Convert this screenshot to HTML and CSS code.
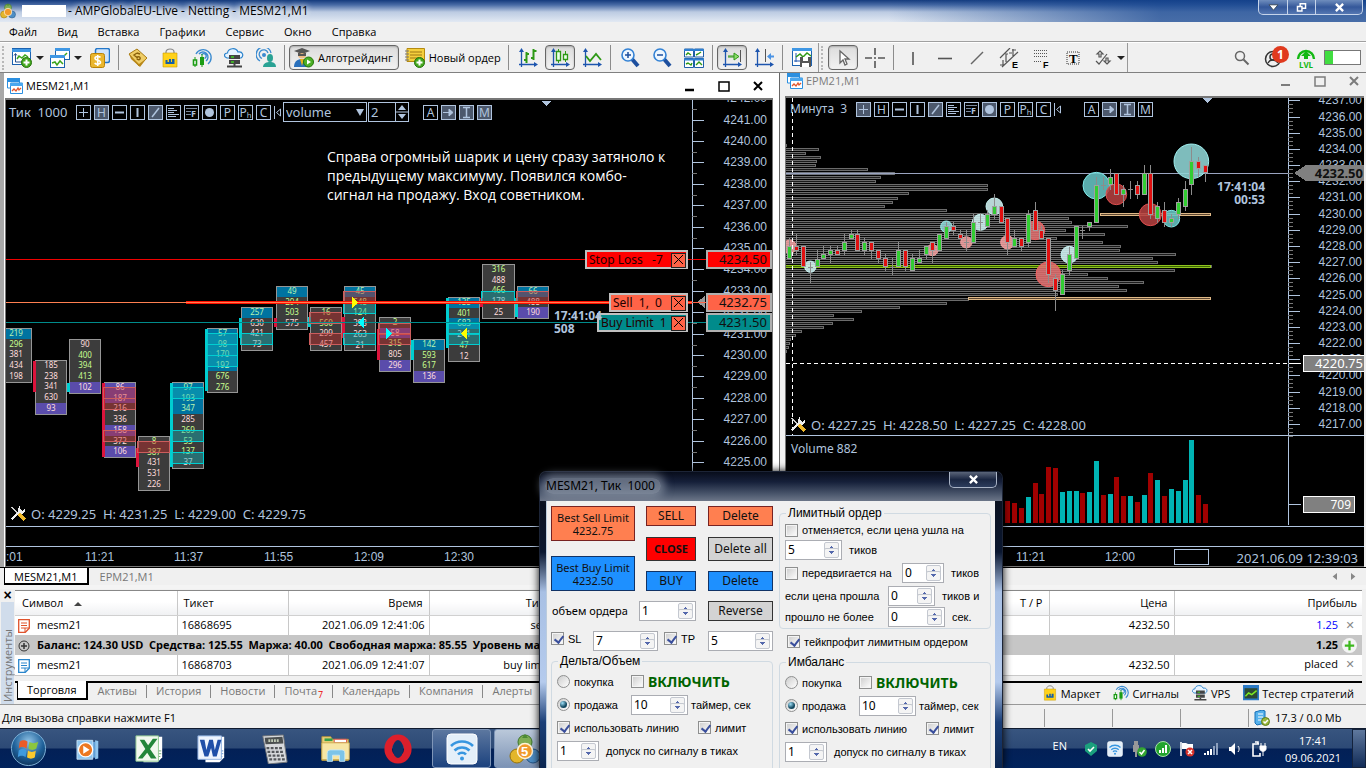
FILE: index.html
```html
<!DOCTYPE html>
<html lang="ru">
<head>
<meta charset="utf-8">
<title>AMPGlobalEU-Live - Netting - MESM21,M1</title>
<link rel="stylesheet" href="styles.css">
</head>
<body>
<svg class="defs" aria-hidden="true">
  <symbol id="i-newchart" viewBox="0 0 20 20"><rect x=".5" y=".5" width="18" height="16" fill="#fff" stroke="#1c62b0"/><path d="M0 1h19v3H0z" fill="#3f97e4"/><path d="M3.500 6v8h12M2 7.500l1.500-2 1.500 2" stroke="#27508c" fill="none"/><path d="M5 11l2-3 3 2 3-3 3 2" stroke="#3ba41c" fill="none" stroke-width="1.500"/><circle cx="14.500" cy="14.500" r="5" fill="#45a81f" stroke="#24720c"/><path d="M14.500 11.500v6M11.500 14.500h6" stroke="#fff" stroke-width="2"/></symbol>
  <symbol id="i-profiles" viewBox="0 0 20 20"><rect x="5.500" y=".5" width="14" height="11" fill="#fff" stroke="#1c62b0"/><path d="M5 0h15v3H5z" fill="#3f97e4"/><path d="M13 9l4-4" stroke="#3ba41c" stroke-width="1.500"/><rect x=".5" y="7.500" width="14" height="12" fill="#fff" stroke="#1c62b0"/><path d="M0 7h15v3H0z" fill="#3f97e4"/><path d="M2 15l3-1 2 3 3-4 3 3" stroke="#3ba41c" fill="none" stroke-width="1.500"/></symbol>
  <symbol id="i-dollar" viewBox="0 0 20 20"><rect x="5.500" y=".5" width="14" height="14" rx="2" fill="#cfe4fb" stroke="#2477c9" stroke-width="1.500"/><rect x=".5" y="5.500" width="14" height="14" rx="2" fill="#eab62e" stroke="#b98308"/><path d="M10.500 9.500c-1-1.500-5.500-1.500-5.500.8 0 2.500 5.500 1.500 5.500 4 0 2.300-4.500 2.300-5.800.6M7.700 7v11" stroke="#fff" fill="none" stroke-width="1.600"/></symbol>
  <symbol id="i-gold" viewBox="0 0 20 20"><path d="M1 6l8-5 10 9-8 8z" fill="#f0ce67" stroke="#a97b14"/><path d="M1 6l2 5 9 8 7-9-8 6z" fill="#b88718"/><path d="M9 5l-3 2 3 2.500c1-1.500 4-.5 3 1.500-1 1.300-3 .6-3-.5M9 5l3 1" fill="none" stroke="#8a610b" stroke-width="1.400"/></symbol>
  <symbol id="i-bag" viewBox="0 0 20 20"><path d="M6 7V4c0-4 8-4 8 0v3" fill="none" stroke="#888" stroke-width="1.200"/><path d="M3 5h14v14H3z" fill="#ffd21a" stroke="#c99a00" stroke-width=".6"/><path d="M5.500 16v-4h2v2h1.500v-3h2v3H12v-3h2.500v5z" fill="#155fa8"/></symbol>
  <symbol id="i-signal" viewBox="0 0 20 20"><path d="M4 6a8 8 0 1 1 12 10M7 6a5 5 0 1 1 7 7M9.500 7a2.500 2.500 0 1 1 3 3.500" fill="none" stroke="#3b8bd0" stroke-width="1.400"/><path d="M3 9v10M10 6v13" stroke="#1b9c14"/><path d="M1.500 12h3v5h-3z" fill="#fff" stroke="#1b9c14" stroke-width="1.600"/><path d="M8 9h4v8H8z" fill="#1b9c14"/></symbol>
  <symbol id="i-vps" viewBox="0 0 20 20"><path d="M5 10H3C-.5 9-.5 5 3.500 5 4 0 12-1 14 4c5-1 6 4 3 6z" fill="#e8f4ff" stroke="#2b83cc" stroke-width="1.200"/><path d="M5 7h11v4H5zM5 12h11v4H5z" fill="#444"/><path d="M7 9h3M7 14h3" stroke="#40d020" stroke-width="1.300"/><path d="M10.500 16v2M3 18.500h15" stroke="#444" stroke-width="2"/></symbol>
  <symbol id="i-community" viewBox="0 0 20 20"><path d="M4 13A7.500 7.500 0 1 1 15 5M6 10.500a4.500 4.500 0 1 1 6-5.500" fill="none" stroke="#3b8bd0" stroke-width="1.300"/><circle cx="8" cy="7" r="2" fill="#3b8bd0"/><ellipse cx="14" cy="10" rx="3" ry="4" fill="#2aa294"/><path d="M7 19c0-4 4-5 7-5s6 1 6 5z" fill="#2aa294"/></symbol>
  <symbol id="i-algo" viewBox="0 0 20 20"><circle cx="8" cy="6.500" r="4" fill="#f0bc85"/><path d="M0 3l8-3 8 3-8 3zM4 5v3h8V5z" fill="#555"/><path d="M0 19c0-6 4-8 8-8s7 2 8 8z" fill="#2a70bb"/><path d="M6 11l2 7 2-7z" fill="#e5b11d"/><circle cx="14.500" cy="14" r="5" fill="#4caf26" stroke="#26760c"/><path d="M13 11.500l4 2.500-4 2.500z" fill="#fff"/></symbol>
  <symbol id="i-order" viewBox="0 0 20 20"><path d="M2 .5h17.500v13H2z" fill="#f4cf3d" stroke="#b58a10"/><path d="M5 4h12M5 7h12M5 10h9" stroke="#9d7715"/><path d="M0 3h4M0 6h4M0 9h4M0 12h4" stroke="#777"/><circle cx="14.500" cy="14.500" r="5" fill="#45a81f" stroke="#24720c"/><path d="M14.500 11.500v6M11.500 14.500h6" stroke="#fff" stroke-width="2"/></symbol>
  <symbol id="i-axes" viewBox="0 0 20 20"><path d="M3.500 2v17M1 16.500h17" stroke="#1d55ae" stroke-width="1.300"/><path d="M1 4l2.500-4L6 4zM16 14l4 2.500-4 2.500z" fill="#1d55ae"/></symbol>
  <symbol id="i-bars" viewBox="0 0 20 20"><use href="#i-axes"/><path d="M8.500 4v11M6 12h2M9 6h2M15.500 1v11M13 10h2M16 3h2.500" stroke="#2e9916" stroke-width="2"/></symbol>
  <symbol id="i-candles" viewBox="0 0 20 20"><use href="#i-axes"/><path d="M8.500 1v14M15.500 3v11" stroke="#2e9916"/><path d="M6.500 3.500h4v9h-4zM13.500 6.500h4v5h-4z" fill="#eaffea" stroke="#2e9916" stroke-width="1.300"/></symbol>
  <symbol id="i-line" viewBox="0 0 20 20"><use href="#i-axes"/><path d="M4 8l4 5 6-7 5 6" fill="none" stroke="#2e9916" stroke-width="1.800"/></symbol>
  <symbol id="i-zoomin" viewBox="0 0 20 20"><path d="M12 11l6 7" stroke="#1d4f9e" stroke-width="4"/><circle cx="8" cy="7" r="6" fill="#eef7ff" stroke="#3382d5" stroke-width="1.600"/><path d="M8 4v6M5 7h6" stroke="#1d4f9e" stroke-width="1.500"/></symbol>
  <symbol id="i-zoomout" viewBox="0 0 20 20"><path d="M12 11l6 7" stroke="#1d4f9e" stroke-width="4"/><circle cx="8" cy="7" r="6" fill="#eef7ff" stroke="#3382d5" stroke-width="1.600"/><path d="M5 7h6" stroke="#1d4f9e" stroke-width="1.500"/></symbol>
  <symbol id="i-tile" viewBox="0 0 20 20"><path d="M.5 1h9v8h-9zM10.500 1h9v8h-9zM.5 10.500h9v9h-9zM10.500 10.500h9v9h-9z" fill="#fff" stroke="#1f5fa8"/><path d="M0 1h20v2H0zM0 10.500h20v2H0z" fill="#2f7fd0"/><path d="M2 7l2-2 3 2M12 7l2-1 3-2M2 16l2-1 3 2 1-2M12 17l3-3 3 3" fill="none" stroke="#2e9916" stroke-width="1.400"/></symbol>
  <symbol id="i-scroll" viewBox="0 0 20 20"><use href="#i-axes"/><path d="M18.500 2v12" stroke="#555"/><path d="M6 8h6M12 5l5 3.500-5 3.500zM6 9h6" fill="#8ddc6c" stroke="#2e9916"/></symbol>
  <symbol id="i-shift" viewBox="0 0 20 20"><use href="#i-axes"/><path d="M11.500 1v13" stroke="#555"/><path d="M20 7.500h-3V5l-4 3.500 4 3.500V9.500h3z" fill="#4b93e4"/></symbol>
  <symbol id="i-template" viewBox="0 0 20 20"><rect x=".5" y=".5" width="19" height="17" fill="#fff" stroke="#1c62b0"/><path d="M0 0h20v3H0z" fill="#3f97e4"/><path d="M4 5v9M2 13h6" stroke="#1d55ae"/><path d="M4 9l4-3 3 3 4-4 4 3" stroke="#2e9916" fill="none" stroke-width="1.500"/><path d="M8 9h11v10H8z" fill="#555"/><path d="M11 9h5v4h-5zM10 15h7v4h-7z" fill="#fff"/></symbol>
  <symbol id="i-cursor" viewBox="0 0 20 20"><path d="M7 3v12l3-3 2 5 2-1-2-5h4z" fill="#fff" stroke="#666" stroke-width="1.300"/></symbol>
  <symbol id="i-cross" viewBox="0 0 20 20"><path d="M10 0v7M10 13v7M0 10h7M13 10h7M9 10h2" stroke="#555" stroke-width="1.600"/></symbol>
  <symbol id="i-vline" viewBox="0 0 20 20"><path d="M10 4v13" stroke="#555" stroke-width="1.600"/></symbol>
  <symbol id="i-hline" viewBox="0 0 20 20"><path d="M3 10.500h14" stroke="#555" stroke-width="1.600"/></symbol>
  <symbol id="i-trend" viewBox="0 0 20 20"><path d="M4 16L16 4" stroke="#666" stroke-width="1.500"/></symbol>
  <symbol id="i-channel" viewBox="0 0 20 20"><path d="M1 10L11 0M3 19L19 4M1 17h3v-5M7 14V6h2M14 8V1M10 5h3M13 2h4" stroke="#555" fill="none" stroke-width="1.200"/></symbol>
  <symbol id="i-fibo" viewBox="0 0 20 20"><path d="M3 2.500h14M3 5.500h14M3 8.500h14M3 13.500h8" stroke="#555" stroke-dasharray="1 1"/></symbol>
  <symbol id="i-text" viewBox="0 0 20 20"><path d="M4 4h12v12H4z" fill="none" stroke="#333" stroke-dasharray="1 1"/></symbol>
  <symbol id="i-objects" viewBox="0 0 20 20"><path d="M7 3l3 3H8v3H6V6H4zM14 16l3-3h-2v-3h-2v3h-2zM3 13l3 3 8-10" fill="none" stroke="#555" stroke-width="1.200"/></symbol>
  <symbol id="i-search" viewBox="0 0 20 20"><circle cx="8" cy="8" r="4.500" fill="none" stroke="#666" stroke-width="1.500"/><path d="M11.500 11.500l5 5" stroke="#666" stroke-width="2"/></symbol>
  <symbol id="i-user" viewBox="0 0 20 20"><circle cx="9" cy="11" r="7.500" fill="none" stroke="#333" stroke-width="1.500"/><circle cx="9" cy="9" r="3" fill="none" stroke="#333" stroke-width="1.500"/><path d="M4 15c2-4 8-4 10 0" fill="none" stroke="#333" stroke-width="1.500"/></symbol>
  <symbol id="i-level" viewBox="0 0 20 14"><path d="M2 12a8 8 0 1 1 16 0" fill="none" stroke="#14b814" stroke-width="2.400"/><path d="M10 4l5 5h-3v3H8V9H5z" fill="#14b814"/></symbol>
  <symbol id="i-window" viewBox="0 0 16 16"><path d="M.5 1h12v9H.5z" fill="#fff" stroke="#2b8fe0"/><path d="M0 0h13v4H0z" fill="#2b8fe0"/><path d="M3.500 5h12v10.500h-12z" fill="#fff" stroke="#2b8fe0"/><path d="M3 5h13v3H3z" fill="#4aa7ee"/><path d="M5 13l2-2 2 2 2-3 1 2 2-2" fill="none" stroke="#e0542c" stroke-width="1.300"/></symbol>
  <symbol id="i-mt" viewBox="0 0 32 32"><circle cx="16" cy="9" r="7" fill="#7fae55" stroke="#3e7529"/><circle cx="8" cy="23" r="7" fill="#e3b62b" stroke="#94720e"/><circle cx="24" cy="23" r="7" fill="#4d8dc4" stroke="#235283"/><path d="M16 1l3 4h-6z" fill="#4c8b34"/><circle cx="16" cy="18" r="7.500" fill="#f19a2b" stroke="#fff4d8" stroke-width="1.500"/></symbol>
  <symbol id="i-doc" viewBox="0 0 12 14"><path d="M.7.7h10.600v8.600l-4 4H.7z" fill="#fff" stroke="currentColor" stroke-width="1.300"/><path d="M3 4h6M3 6.500h6M3 9h4" stroke="currentColor"/><path d="M7 13V9h4" fill="none" stroke="currentColor"/></symbol>
  <symbol id="i-tester" viewBox="0 0 20 20"><path d="M1 1h18v17H1z" fill="#2d4a35" stroke="#2b7ac7" stroke-width="2"/><path d="M0 0h20v4H0z" fill="#2b7ac7"/><path d="M3 14l4-4 4 2 6-5" stroke="#7bea23" fill="none" stroke-width="1.800"/></symbol>
  <symbol id="i-server" viewBox="0 0 16 16"><path d="M1 2l7-2 3 1v12l-8 2-2-2z" fill="#55b1ec" stroke="#1670b8"/><path d="M4 4h5M4 7h5M4 10h4" stroke="#fff"/><circle cx="11.500" cy="11.500" r="4" fill="#9ab83b" stroke="#5d7a1b"/><path d="M9.500 11.500l1.500 1.500 3-3" stroke="#fff" fill="none" stroke-width="1.500"/></symbol>
  <symbol id="i-wifi" viewBox="0 0 32 32"><rect x="1" y="1" width="30" height="30" rx="4" fill="#e4eff9" stroke="#fff"/><path d="M5 13c6-6 16-6 22 0M8.500 17.500c4-4 11-4 15 0M12 21.500c2-2.300 6-2.300 8 0" fill="none" stroke="#3796e0" stroke-width="2.600"/><circle cx="16" cy="25.500" r="2" fill="#3796e0"/></symbol>
  <symbol id="i-tools" viewBox="0 0 18 18"><path d="M3 3l7 8" stroke="#ccc" stroke-width="1.500"/><path d="M10 10l6 6" stroke="#f0b92b" stroke-width="3"/><path d="M2.500 15.500L12 6" stroke="#eee" stroke-width="2"/><path d="M11 1.500v4.500l2.500 1L16 4v4l-3 2-4-2V5z" fill="#eee"/></symbol>
</svg>

<header class="titlebar">
  <svg class="app-icon"><use href="#i-mt"/></svg>
  <span class="masked"></span>
  <h1>- AMPGlobalEU-Live - Netting - MESM21,M1</h1>
  <div class="win-buttons">
    <button aria-label="Свернуть"><svg viewBox="0 0 12 10"><path d="M1 2h10L6 8z" fill="#fff" stroke="#345"/></svg></button>
    <button aria-label="Развернуть"><svg viewBox="0 0 12 10"><path d="M4.500.8h6v5h-6z" fill="none" stroke="#fff" stroke-width="1.600"/><path d="M1.500 3.800h5v5h-5z" fill="#48669d" stroke="#fff" stroke-width="1.600"/></svg></button>
    <button class="wide" aria-label="Закрыть"><svg viewBox="0 0 12 10"><path d="M2 1l8 8M10 1L2 9" stroke="#fff" stroke-width="2.600"/></svg></button>
  </div>
</header>

<nav class="menu">
  <a href="#">Файл</a><a href="#">Вид</a><a href="#">Вставка</a><a href="#">Графики</a><a href="#">Сервис</a><a href="#">Окно</a><a href="#">Справка</a>
</nav>

<div class="toolbar">
  <i class="grip"></i>
  <button class="tb drop" aria-label="Новый график"><svg><use href="#i-newchart"/></svg><b class="caret"></b></button>
  <button class="tb drop" aria-label="Профили"><svg><use href="#i-profiles"/></svg><b class="caret"></b></button>
  <button class="tb" aria-label="Обзор рынка"><svg><use href="#i-dollar"/></svg></button>
  <i class="sep"></i>
  <button class="tb" aria-label="Редактор"><svg><use href="#i-gold"/></svg></button>
  <button class="tb" aria-label="Маркет"><svg><use href="#i-bag"/></svg></button>
  <button class="tb" aria-label="Сигналы"><svg><use href="#i-signal"/></svg></button>
  <button class="tb" aria-label="VPS"><svg><use href="#i-vps"/></svg></button>
  <button class="tb" aria-label="Сообщество"><svg><use href="#i-community"/></svg></button>
  <i class="sep"></i>
  <button class="tb text pressed"><svg><use href="#i-algo"/></svg>Алготрейдинг</button>
  <button class="tb text"><svg><use href="#i-order"/></svg>Новый ордер</button>
  <i class="sep"></i>
  <button class="tb" aria-label="Бары"><svg><use href="#i-bars"/></svg></button>
  <button class="tb pressed" aria-label="Свечи"><svg><use href="#i-candles"/></svg></button>
  <button class="tb" aria-label="Линия"><svg><use href="#i-line"/></svg></button>
  <i class="sep"></i>
  <button class="tb" aria-label="Увеличить"><svg><use href="#i-zoomin"/></svg></button>
  <button class="tb" aria-label="Уменьшить"><svg><use href="#i-zoomout"/></svg></button>
  <button class="tb" aria-label="Плитка"><svg><use href="#i-tile"/></svg></button>
  <i class="sep"></i>
  <button class="tb pressed" aria-label="Автопрокрутка"><svg><use href="#i-scroll"/></svg></button>
  <button class="tb" aria-label="Сдвиг"><svg><use href="#i-shift"/></svg></button>
  <i class="sep"></i>
  <button class="tb" aria-label="Шаблоны"><svg><use href="#i-template"/></svg></button>
  <i class="edge"></i><i class="grip"></i>
  <button class="tb pressed" aria-label="Курсор"><svg><use href="#i-cursor"/></svg></button>
  <button class="tb" aria-label="Перекрестие"><svg><use href="#i-cross"/></svg></button>
  <i class="sep"></i>
  <button class="tb" aria-label="Вертикальная линия"><svg><use href="#i-vline"/></svg></button>
  <button class="tb" aria-label="Горизонтальная линия"><svg><use href="#i-hline"/></svg></button>
  <button class="tb" aria-label="Трендовая линия"><svg><use href="#i-trend"/></svg></button>
  <button class="tb" aria-label="Канал"><svg><use href="#i-channel"/><text x="13" y="20" class="glyph">E</text></svg></button>
  <button class="tb" aria-label="Фибоначчи"><svg><use href="#i-fibo"/><text x="12" y="20" class="glyph">F</text></svg></button>
  <button class="tb" aria-label="Текст"><svg><use href="#i-text"/><text x="6" y="15" class="glyph serif">T</text></svg></button>
  <button class="tb drop" aria-label="Объекты"><svg><use href="#i-objects"/></svg><b class="caret"></b></button>
  <i class="edge"></i>
  <span class="spacer"></span>
  <button class="tb" aria-label="Поиск"><svg><use href="#i-search"/></svg></button>
  <button class="tb" aria-label="Уведомления"><svg><use href="#i-user"/></svg><span class="count">1</span></button>
  <button class="tb level"><svg><use href="#i-level"/></svg>LVL</button>
  <span class="battery"><i></i></span>
</div>

<main class="workspace">
  <section class="pane left">
    <header class="pane-head">
      <svg><use href="#i-window"/></svg><h2>MESM21,M1</h2>
      <button aria-label="Свернуть"><svg viewBox="0 0 12 12"><path d="M1 10h9" stroke="currentColor" stroke-width="2.500"/></svg></button>
      <button aria-label="Развернуть"><svg viewBox="0 0 12 12"><path d="M1 2h10v9H1z" fill="none" stroke="currentColor" stroke-width="1.500"/></svg></button>
      <button aria-label="Закрыть"><svg viewBox="0 0 12 12"><path d="M2 2l8 8M10 2l-8 8" stroke="currentColor" stroke-width="2"/></svg></button>
    </header>
    <div class="chart">
      <div class="plot">
        <svg id="tick-plot" class="canvas" role="img" aria-label="MESM21 тик 1000"></svg>
        <div class="tools" data-on="1 4 12 13 14">
          <span class="tools-title">Тик&nbsp; 1000</span>
        </div>
      </div>
      <svg id="tick-axis" class="canvas axis"></svg>
      <div class="blank"></div>
      <svg id="tick-time" class="canvas time"></svg>
    </div>
  </section>
  <section class="pane right">
    <header class="pane-head">
      <svg><use href="#i-window"/></svg><h2>EPM21,M1</h2>
      <button aria-label="Свернуть"><svg viewBox="0 0 12 12"><path d="M1 10h9" stroke="currentColor" stroke-width="2"/></svg></button>
      <button aria-label="Развернуть"><svg viewBox="0 0 12 12"><path d="M1 2h10v9H1z" fill="none" stroke="currentColor" stroke-width="1.500"/></svg></button>
      <button aria-label="Закрыть"><svg viewBox="0 0 12 12"><path d="M2 2l8 8M10 2l-8 8" stroke="currentColor" stroke-width="2"/></svg></button>
    </header>
    <div class="chart">
      <div class="plot">
        <svg id="minute-plot" class="canvas" role="img" aria-label="EPM21 минута 3"></svg>
        <div class="tools" data-on="0 4 7 12 13">
          <span class="tools-title">Минута&nbsp; 3</span>
        </div>
      </div>
      <svg id="minute-axis" class="canvas axis"></svg>
      <div class="blank"></div>
      <svg id="minute-time" class="canvas time"></svg>
    </div>
  </section>
</main>

<nav class="chart-tabs">
  <a class="active" href="#">MESM21,M1</a><a href="#">EPM21,M1</a>
  <span class="arrows"><svg viewBox="0 0 26 8"><path d="M5 0v8L0 4zM21 0v8l5-4z" fill="#888"/></svg></span>
</nav>

<section class="toolbox">
  <div class="rail"><button aria-label="Закрыть">×</button><span>Инструменты</span></div>
  <div class="toolbox-main">
    <table>
      <colgroup><col class="c-sym"><col class="c-ticket"><col class="c-time"><col class="c-type"><col><col class="c-tp"><col class="c-price"><col class="c-profit"></colgroup>
      <thead><tr><th class="l">Символ <b class="up"></b></th><th class="l">Тикет</th><th>Время</th><th>Тип</th><th>Объем</th><th>T / P</th><th>Цена</th><th class="p">Прибыль</th></tr></thead>
      <tbody>
        <tr><td class="l"><svg class="doc sell"><use href="#i-doc"/></svg>mesm21</td><td class="l">16868695</td><td>2021.06.09 12:41:06</td><td>sell</td><td></td><td></td><td>4232.50</td><td class="blue">1.25<button aria-label="Закрыть">✕</button></td></tr>
        <tr class="sum"><td class="l" colspan="7"><svg class="doc plus" viewBox="0 0 12 12"><circle cx="6" cy="6" r="5" fill="none" stroke="#333"/><path d="M6 3v6M3 6h6" stroke="#333" stroke-width="1.500"/></svg>Баланс: 124.30 USD&nbsp; Средства: 125.55&nbsp; Маржа: 40.00&nbsp; Свободная маржа: 85.55&nbsp; Уровень маржи: 313.88 %</td><td>1.25<button class="add" aria-label="Добавить"><svg viewBox="0 0 16 16"><circle cx="8" cy="8" r="8" fill="#f4f4f4"/><path d="M8 3v10M3 8h10" stroke="#3db81e" stroke-width="2.400"/></svg></button></td></tr>
        <tr><td class="l"><svg class="doc buy"><use href="#i-doc"/></svg>mesm21</td><td class="l">16868703</td><td>2021.06.09 12:41:07</td><td>buy limit</td><td></td><td></td><td>4232.50</td><td>placed<button aria-label="Удалить">✕</button></td></tr>
      </tbody>
    </table>
    <nav class="tool-tabs">
      <a class="active" href="#">Торговля</a><a href="#">Активы</a><a href="#">История</a><a href="#">Новости</a><a href="#">Почта<sub>7</sub></a><a href="#">Календарь</a><a href="#">Компания</a><a href="#">Алерты</a>
      <span class="spacer"></span>
      <a class="svc" href="#"><svg><use href="#i-bag"/></svg>Маркет</a>
      <a class="svc" href="#"><svg><use href="#i-signal"/></svg>Сигналы</a>
      <a class="svc" href="#"><svg><use href="#i-vps"/></svg>VPS</a>
      <a class="svc" href="#"><svg><use href="#i-tester"/></svg>Тестер стратегий</a>
    </nav>
  </div>
</section>

<div class="status">
  <span class="hint">Для вызова справки нажмите F1</span>
  <span class="cell"></span><span class="cell"></span><span class="cell"></span>
  <span class="cell net"><svg><use href="#i-server"/></svg>17.3 / 0.0 Mb</span>
</div>

<footer class="taskbar">
  <button class="task" aria-label="Пуск"><svg viewBox="0 0 38 38"><defs><radialGradient id="orb" cx=".5" cy=".3" r=".8"><stop offset="0" stop-color="#8fc3e6"/><stop offset=".55" stop-color="#1d5f98"/><stop offset="1" stop-color="#0a2547"/></radialGradient></defs><circle cx="19" cy="19" r="17.500" fill="url(#orb)" stroke="#7fb2d8"/><path d="M10 12c3-2 5-2 8 0l-1 7c-3-2-6-2-8 0z" fill="#ea5b27"/><path d="M20 12c3 2 5 2 9 0l-2 7c-3 2-5 2-8 0z" fill="#8cc63e"/><path d="M9 21c3-2 5-2 8 0l-1 7c-3-2-5-2-8 0z" fill="#3f9ade"/><path d="M18.500 21c3 2 5 2 8 0l-1 7c-3 2-5 2-8 0z" fill="#fbc92e"/></svg></button>
  <button class="task" aria-label="Проигрыватель"><svg viewBox="0 0 38 38"><path d="M6 10h22v20H6z" fill="#5e9fd8"/><path d="M28 8l4 1v22l-4 1z" fill="#8fc5ee"/><path d="M5 8h20v24H5z" fill="#8fc5ee" stroke="#d3e9fa"/><circle cx="16" cy="20" r="9" fill="#ec7821" stroke="#fff" stroke-width="1.500"/><path d="M13 15l8 5-8 5z" fill="#fff"/></svg></button>
  <button class="task" aria-label="Excel"><svg viewBox="3 3 32 32"><path d="M12 6h20v22l-5 5H12z" fill="#fff"/><path d="M23 21h8M23 24h8M23 27h7M23 30h5" stroke="#6fae6f"/><path d="M4 5h24v27H4z" fill="#f1f8ee" stroke="#8fc68f"/><path d="M8 9h5l4 6 5-7h5l-8 11 7 10h-6l-4-6-5 6H6l8-10z" fill="#23863a"/></svg></button>
  <button class="task" aria-label="Word"><svg viewBox="3 3 32 32"><path d="M12 6h20v22l-5 5H12z" fill="#fff"/><path d="M25 21h6M25 24h6M25 27h5" stroke="#5f8fd0"/><path d="M4 5h25v25H4z" fill="#eef4fd" stroke="#8fb0e0"/><path d="M6 9h5l2 11 3-11h4l2 11 3-11h4l-5 18h-4l-2-9-3 9h-4z" fill="#1f4fa8"/></svg></button>
  <button class="task" aria-label="Калькулятор"><svg viewBox="2 3 32 32"><path d="M6 5l22-1 4 29-20 2z" fill="#d7d9dc" stroke="#6f7276"/><path d="M8 7l19-1 1 7-19 1z" fill="#4b4f50"/><path d="M12 10h12" stroke="#bfc9b5" stroke-width="3" stroke-dasharray="2 1"/><path d="M10 18h18M11 22h18M12 26h17M13 30h17" stroke="#54575b" stroke-width="2.500" stroke-dasharray="3 1.500"/></svg></button>
  <button class="task" aria-label="Проводник"><svg viewBox="2 4 34 34"><path d="M3 7h10l2 3h18v24H3z" fill="#e9cf76" stroke="#b3923a"/><path d="M6 9h9v3H6z" fill="#37a048"/><path d="M17 10h14v4H17z" fill="#fff" stroke="#d44"/><path d="M3 14h31v19H3z" fill="#f7e6a5" stroke="#c9a94d"/><path d="M9 35v-9c0-3 2-4 4-4h12c3 0 4 1 4 4v9h-6v-7h-8v7z" fill="#7cc4e8" stroke="#c8e8f7"/></svg></button>
  <button class="task" aria-label="Opera"><svg viewBox="3 3 32 32"><ellipse cx="19" cy="19" rx="10.500" ry="11.500" fill="none" stroke="#dc1f2b" stroke-width="8"/><ellipse cx="19" cy="19" rx="5.500" ry="9.500" fill="#0f3164"/></svg></button>
  <button class="task open" aria-label="Wi-Fi"><svg viewBox="0 0 32 32"><use href="#i-wifi"/></svg></button>
  <button class="task open lit" aria-label="MetaTrader"><svg viewBox="0 0 32 32"><use href="#i-mt"/><text x="12" y="23" class="five">5</text></svg></button>
  <span class="spacer"></span>
  <div class="tray">
    <span class="lang">EN</span>
    <svg viewBox="0 0 16 16"><path d="M8 1l6 3v6l-6 5-6-5V4z" fill="#1ba07d"/><path d="M5 8l2 2 4-4" stroke="#fff" fill="none" stroke-width="1.600"/></svg>
    <svg><use href="#i-wifi"/></svg>
    <svg viewBox="0 0 16 16"><path d="M3 0h4v4H3zM2 4h6v7H2zM4 11h2v5H4z" fill="#999"/><circle cx="11" cy="11" r="4.800" fill="#33a532"/><path d="M8.500 11l2 2 3-4" stroke="#fff" fill="none" stroke-width="1.500"/></svg>
    <svg viewBox="0 0 16 16"><circle cx="8" cy="8" r="7.500" fill="#23a52e" stroke="#a6e0a8"/><path d="M4 9h2v3H4zM7 7h2v5H7zM10 4h2v8h-2z" fill="#fff"/></svg>
    <svg viewBox="0 0 16 16"><path d="M2 1v14" stroke="#fff" stroke-width="1.500"/><path d="M3 2h4l2 1h5v6H8L7 8H3z" fill="#fff"/><circle cx="11" cy="11" r="4.500" fill="#d8322a"/><path d="M9 9l4 4M13 9l-4 4" stroke="#fff" stroke-width="1.500"/></svg>
    <svg viewBox="0 0 16 16"><path d="M1 12h2v2H1zM4 10h2v4H4zM7 8h2v6H7z" fill="#fff"/><path d="M10 5h2v9h-2zM13 2h2v12h-2z" fill="#8c9fbd"/></svg>
    <svg viewBox="0 0 16 16"><path d="M2 6h2l4-4v12l-4-4H2z" fill="#fff"/><path d="M11 5c1.500 2 1.500 4 0 6" stroke="#fff" fill="none"/></svg>
    <svg viewBox="0 0 16 16"><path d="M8 3H2v12h7v-3M4 1h3v2" fill="none" stroke="#fff" stroke-width="1.600"/><path d="M9 5h6v3c0 3-6 3-6 0zM10 2v3M14 2v3M12 10v5" fill="#fff" stroke="#fff"/></svg>
    <div class="clock"><span>17:41</span><span>09.06.2021</span></div>
    <button class="desktop" aria-label="Показать рабочий стол"></button>
  </div>
</footer>

<div class="dialog" role="dialog" aria-labelledby="dlg-title">
  <div class="dlg-head"><h2 id="dlg-title">MESM21, Тик&nbsp; 1000</h2><button aria-label="Закрыть"><svg viewBox="0 0 12 10"><path d="M2 1l8 8M10 1L2 9" stroke="#fff" stroke-width="2.600"/></svg></button></div>
  <form class="dlg-body">
    <div class="dlg-left">
      <div class="orders">
        <div class="col best">
          <button type="button" class="act sell">Best Sell Limit<br>4232.75</button>
          <button type="button" class="act buy">Best Buy Limit<br>4232.50</button>
        </div>
        <div class="col mid">
          <button type="button" class="act sell">SELL</button>
          <button type="button" class="act close">CLOSE</button>
          <button type="button" class="act buy">BUY</button>
        </div>
        <div class="col last">
          <button type="button" class="act sell">Delete</button>
          <button type="button" class="act gray tall">Delete all</button>
          <button type="button" class="act buy">Delete</button>
        </div>
      </div>
      <div class="row volume"><label for="vol">объем ордера</label><span class="spin w57"><input id="vol" value="1"></span><button type="button" class="act gray">Reverse</button></div>
      <div class="row stops"><label class="chk"><input type="checkbox" checked>SL</label><span class="spin w65"><input aria-label="SL" value="7"></span><label class="chk tp"><input type="checkbox" checked>TP</label><span class="spin w65"><input aria-label="TP" value="5"></span></div>
      <fieldset class="signal">
        <legend>Дельта/Объем</legend>
        <div class="row"><label class="chk side"><input type="radio" name="delta">покупка</label><label class="chk enable"><input type="checkbox">ВКЛЮЧИТЬ</label></div>
        <div class="row"><label class="chk side"><input type="radio" name="delta" checked>продажа</label><span class="spin w57"><input id="t1" value="10"></span><label for="t1" class="after">таймер, сек</label></div>
        <div class="row"><label class="chk useline"><input type="checkbox" checked>использовать линию</label><label class="chk"><input type="checkbox" checked>лимит</label></div>
        <div class="row"><span class="spin w42"><input id="d1" value="1"></span><label for="d1" class="after far">допуск по сигналу в тиках</label></div>
      </fieldset>
    </div>
    <div class="dlg-right">
      <fieldset class="limit">
        <legend>Лимитный ордер</legend>
        <div class="row"><label class="chk"><input type="checkbox">отменяется, если цена ушла на</label></div>
        <div class="row"><span class="spin w57"><input id="l1" value="5"></span><label for="l1" class="after far">тиков</label></div>
        <div class="row"><label class="chk move"><input type="checkbox">передвигается на</label><span class="spin w42"><input id="l2" value="0"></span><label for="l2" class="after far">тиков</label></div>
        <div class="row"><label for="l3" class="pre">если цена прошла</label><span class="spin w47"><input id="l3" value="0"></span><label for="l3" class="after far">тиков и</label></div>
        <div class="row"><label for="l4" class="pre">прошло не более</label><span class="spin w57"><input id="l4" value="0"></span><label for="l4" class="after far">сек.</label></div>
      </fieldset>
      <div class="row take"><label class="chk"><input type="checkbox" checked>тейкпрофит лимитным ордером</label></div>
      <fieldset class="signal">
        <legend>Имбаланс</legend>
        <div class="row"><label class="chk side"><input type="radio" name="imb">покупка</label><label class="chk enable"><input type="checkbox">ВКЛЮЧИТЬ</label></div>
        <div class="row"><label class="chk side"><input type="radio" name="imb" checked>продажа</label><span class="spin w57"><input id="t2" value="10"></span><label for="t2" class="after">таймер, сек</label></div>
        <div class="row"><label class="chk useline"><input type="checkbox" checked>использовать линию</label><label class="chk"><input type="checkbox" checked>лимит</label></div>
        <div class="row"><span class="spin w42"><input id="d2" value="1"></span><label for="d2" class="after far">допуск по сигналу в тиках</label></div>
      </fieldset>
    </div>
  </form>
</div>
<script src="charts.js"></script>
</body>
</html>
```
FILE: styles.css
```css
* { box-sizing: border-box; }
body { margin: 0; height: 100vh; min-height: 700px; display: flex; flex-direction: column; overflow: hidden; position: relative; background: #f0f0f0; color: #000; font: 12px/16px "Open Sans", "Noto Sans", sans-serif; }
button { font: inherit; color: inherit; padding: 0; margin: 0; border: 0; background: none; }
a { color: inherit; text-decoration: none; }
h1, h2 { margin: 0; font-weight: 400; }
svg { flex: none; }
.defs { position: absolute; width: 0; height: 0; }
.spacer { flex: 1; }

.titlebar { flex: none; height: 22px; display: flex; align-items: center; gap: 6px; background: linear-gradient(#143a7c 0, #4a6ca6 5px, #bccbe2 12px, #e2e9f3 22px); position: relative; }
.titlebar::after { content: ""; position: absolute; inset: 0; background: linear-gradient(90deg, transparent 65%, #14448f 85%); opacity: .75; }
.app-icon { width: 16px; height: 20px; }
.masked { width: 44px; height: 12px; background: #fff; }
.titlebar h1 { font-size: 12px; line-height: 16px; margin-left: -6px; padding-left: 2px; text-shadow: 0 0 6px #fff, 0 0 6px #fff; }
.win-buttons { margin-left: auto; margin-right: 3px; align-self: flex-start; display: flex; height: 15px; border: 1px solid #c6d4ea; border-top: 0; border-radius: 0 0 5px 5px; z-index: 1; background: linear-gradient(#6f8dbd, #34589a 50%, #5577b2); }
.win-buttons button { width: 28px; display: grid; place-items: center; border-left: 1px solid #c6d4ea; }
.win-buttons button:first-child { border: 0; }
.win-buttons .wide { width: 47px; }
.win-buttons svg { width: 11px; height: 9px; }

.menu { flex: none; height: 20px; display: flex; align-items: center; padding-left: 9px; gap: 20px; border-bottom: 1px solid #a0a0a0; font-size: 11px; }

.toolbar { flex: none; height: 31px; display: flex; align-items: center; border-top: 1px solid #fff; border-bottom: 1px solid #808080; }
.grip { width: 4px; height: 24px; margin: 0 2px; border-left: 2px dotted #b8b8b8; }
.sep { width: 1px; height: 25px; margin: 0 3px 0 2px; background: #8c8c8c; flex: none; }
.edge { width: 1px; align-self: stretch; background: #999; }
.tb { flex: none; width: 32px; height: 25px; display: flex; align-items: center; justify-content: center; border-radius: 4px; position: relative; }
.tb > svg { width: 20px; height: 20px; overflow: visible; }
.tb.pressed { width: 30px; margin: 0 1px; border: 1px solid #666; background: linear-gradient(#dcdcdc, #f2f2f2); box-shadow: inset 0 1px 2px #aaa; }
.tb.drop { width: 38px; justify-content: flex-start; gap: 4px; padding-left: 4px; }
.tb.text { width: auto; padding: 0 5px 0 4px; gap: 4px; font-size: 11px; }
.tb.text.pressed { width: auto; margin: 0 2px 0 1px; }
.caret { border: 4px solid transparent; border-top: 4px solid #222; border-bottom: 0; }
.glyph { font: bold 9px "Liberation Sans", sans-serif; }
.glyph.serif { font: bold 13px "Liberation Serif", serif; }
.count { position: absolute; right: 1px; top: 1px; width: 17px; height: 17px; border-radius: 50%; background: #e03a1e; color: #fff; font-weight: 700; line-height: 17px; text-align: center; }
.tb.level { flex-direction: column; color: #14b814; font: bold 8px/8px "Open Sans", sans-serif; }
.tb.level > svg { height: 14px; }
.battery { width: 37px; height: 15px; margin: 0 5px 0 2px; border: 1px solid #777; background: #fff; }
.battery i { display: block; width: 8px; height: 100%; background: #41dd41; }

.workspace { flex: 1; min-height: 0; display: grid; grid-template-columns: minmax(0, 780fr) minmax(0, 586fr); }
.pane { display: flex; flex-direction: column; min-width: 0; min-height: 0; }
.left { border-left: 4px solid #a8a8a8; border-right: 1px solid #666; background: #fff; padding: 0 6px 0 1px; }
.right { padding: 0 2px 0 5px; background: #f0f0f0; }
.pane-head { flex: none; height: 25px; display: flex; align-items: center; padding: 0 9px 0 2px; color: #000; }
.pane-head h2 { flex: 1; margin-left: 3px; font-size: 11px; line-height: 16px; }
.pane-head svg { width: 16px; height: 16px; }
.pane-head button { width: 12px; height: 12px; margin-left: 22px; display: grid; }
.pane-head button svg { width: 12px; height: 12px; }
.right .pane-head { height: 23px; color: #7c7c7c; padding: 0 4px 7px 2px; }
.chart { flex: 1; min-height: 0; display: grid; grid-template: minmax(0, 1fr) 21px 19px / minmax(0, 1fr) 80px; border: 1px solid #777; border-top: 2px solid #777; background: #000; color: #b0c4de; }
.right .chart { grid-template-columns: minmax(0, 1fr) 76px; border-width: 2px 0 1px 1px; }
.plot { position: relative; min-width: 0; min-height: 0; overflow: hidden; }
.canvas { display: block; width: 100%; height: 100%; overflow: hidden; }
.blank { grid-column: 1 / 3; border-top: 1px solid #b0c4de; border-bottom: 1px solid #b0c4de; }
.time { grid-column: 1 / 3; }
.canvas text { font: 12px "Liberation Sans", sans-serif; fill: #b0c4de; }
.canvas .ui { font: 12px "Noto Sans", sans-serif; }
.canvas .ohlc { font: 13px "Noto Sans", sans-serif; }
.canvas .tag { font: 13px "Noto Sans", sans-serif; fill: #111; }
.canvas .strong { font: bold 12px "Noto Sans", sans-serif; }
.canvas .cellnum { font: 8px "Noto Sans", sans-serif; text-anchor: middle; }
.canvas .note { font: 14px "Open Sans", sans-serif; fill: #fff; }
.canvas .end { text-anchor: end; }

.tools { position: absolute; left: 3px; top: 2px; display: flex; align-items: center; gap: 3px; font: 12px/16px "Noto Sans", sans-serif; white-space: nowrap; }
.tools-title { width: 64px; font-size: 13px; }
.tools button { width: 15px; height: 15px; border: 1px solid #b0c4de; font-size: 12px; line-height: 13px; display: grid; place-items: center; color: #b0c4de; }
.tools button svg { width: 13px; height: 13px; }
.tools button.on { background: #4c586c; }
.tools select { width: 84px; height: 20px; padding: 0 2px; appearance: none; background: #000; border: 1px solid #b0c4de; border-radius: 0; color: #b0c4de; font: 13px "Noto Sans", sans-serif; }
.picker { position: relative; height: 20px; margin-left: -1px; }
.picker::after { content: ""; position: absolute; right: 3px; top: 7px; border: 4px solid transparent; border-top: 7px solid #b0c4de; border-bottom: 0; }
.stepper { display: flex; width: 41px; height: 20px; margin-left: -2px; border: 1px solid #b0c4de; }
.stepper input { width: 27px; min-width: 0; padding: 0 2px; border: 0; border-right: 1px solid #b0c4de; background: #000; color: #b0c4de; font: 13px "Noto Sans", sans-serif; }
.stepper svg { width: 12px; height: 18px; }
.modes { display: flex; gap: 3px; margin-left: 11px; }
.right .tools .modes { margin-left: 20px; }
.right .tools { left: 4px; top: 3px; }
.right .tools-title { width: 63px; font-size: 12px; }

.chart-tabs { flex: none; height: 22px; display: flex; align-items: flex-start; padding-left: 4px; border-top: 1px solid #000; color: #777; font-size: 11px; position: relative; border-bottom: 4px solid #f4f4f4; }
.chart-tabs a { height: 17px; padding: 0 11px; line-height: 17px; }
.chart-tabs .active { color: #000; background: #fff; border: 1px solid #000; border-width: 0 2px 2px 1px; padding: 0 9px; }
.arrows { margin-left: auto; margin-right: 10px; }
.arrows svg { width: 24px; height: 7px; }

.toolbox { flex: none; display: flex; height: 115px; padding-right: 4px; }
.rail { width: 15px; flex: none; display: flex; flex-direction: column; align-items: center; }
.rail button { font: bold 14px/13px "Liberation Sans", sans-serif; height: 13px; }
.rail span { flex: 1; width: 13px; background: #d0dceb; color: #777; writing-mode: vertical-rl; transform: rotate(180deg); font-size: 11px; line-height: 13px; text-align: left; padding-top: 2px; }
.toolbox-main { flex: 1; min-width: 0; margin-top: 1px; display: flex; flex-direction: column; border-top: 1px solid #888; }
table { width: 100%; table-layout: fixed; border-collapse: collapse; background: #fff; font-size: 11px; line-height: 16px; }
.c-sym { width: 162px; } .c-ticket { width: 111px; } .c-time { width: 141px; } .c-type { width: 123px; } .c-tp { width: 120px; } .c-price { width: 125px; } .c-profit { width: 188px; }
th, td { height: 20px; padding: 0 4px; text-align: right; white-space: nowrap; overflow: hidden; border-right: 1px solid #c8c8c8; font-weight: 400; }
td:last-child, th:last-child { border-right: 0; }
th { height: 24px; background: linear-gradient(#fff 45%, #f0f1f3); border-bottom: 1px solid #d0d0d0; padding-right: 6px; }
.l { text-align: left; }
th.l { padding-left: 7px; }
th.l + th.l { padding-left: 6px; }
th.p { padding-right: 5px; }
tbody tr:last-child td { border-bottom: 1px solid #c8c8c8; }
.sum td { background: #c6c6c6; font-weight: 700; border: 0; }
.up { display: inline-block; margin-left: 8px; border: 4px solid transparent; border-bottom: 4px solid #444; border-top: 0; vertical-align: middle; }
.doc { width: 12px; height: 14px; margin: 0 7px 0 -1px; vertical-align: middle; }
.doc.sell { color: #e0532c; } .doc.buy { color: #2a86cc; }
.blue { color: #00f; }
td button { width: 16px; margin-left: 4px; color: #888; font: bold 11px/16px "DejaVu Sans", sans-serif; vertical-align: middle; }
.add svg { width: 15px; height: 15px; display: block; }

.tool-tabs { flex: 1; margin-top: 5px; border-top: 2px solid #000; display: flex; align-items: flex-start; color: #777; font-size: 12px; line-height: 17px; white-space: nowrap; }
.tool-tabs > a:not(.svc):not(.active) { padding: 0 9px; border-right: 1px solid #888; height: 13px; margin-top: 2px; line-height: 12px; font-size: 11px; }
.tool-tabs > a:nth-child(8) { border: 0; }
.tool-tabs .active { margin: -2px 0 0 2px; padding: 0 10px 0 9px; height: 19px; background: #fff; border: 1px solid #000; border-width: 0 2px 2px 1px; color: #000; font-size: 11px; }
.tool-tabs sub { color: #e00; font-size: 9px; line-height: 1px; padding-left: 1px; }
.svc { display: flex; align-items: center; gap: 3px; color: #000; margin: 2px 8px 0 5px; font-size: 11px; }
.svc svg { width: 16px; height: 16px; }

.status { flex: none; height: 24px; display: flex; align-items: stretch; padding: 4px 0 1px 2px; border-top: 1px solid #999; }
.hint { flex: 1; line-height: 18px; font-size: 11px; }
.status .cell { width: 68px; border-left: 1px solid #999; }
.status .net { width: 118px; display: flex; align-items: center; gap: 5px; padding-left: 5px; font-size: 11px; }
.net svg { width: 16px; height: 16px; }

.taskbar { flex: none; height: 40px; display: flex; align-items: stretch; color: #fff; border-top: 1px solid #111c30; background: linear-gradient(#38557f, #2d4a76 48%, #032056 52%, #01235c); }
.task { width: 62px; display: grid; place-items: center; }
.task:first-child { width: 57px; }
.task svg { width: 37px; height: 37px; }
.task:nth-child(n+2) svg { width: 30px; height: 30px; }
.task:nth-child(n+8) svg { width: 32px; height: 32px; }
.task.open { width: 59px; margin-left: 3px; border: 1px solid #7f96b8; border-radius: 3px; background: linear-gradient(#5c779f, #1c427e); }
.task.lit { width: 62px; background: linear-gradient(#bac8da, #7c93b5); }
.five { font: bold 13px "Liberation Sans", sans-serif; fill: #fff; }
.tray { display: flex; align-items: center; gap: 8px; }
.tray > svg { width: 16px; height: 16px; }
.lang { margin-right: 8px; padding-bottom: 6px; font-size: 11px; }
.clock { display: flex; flex-direction: column; align-items: center; width: 62px; font-size: 11px; line-height: 17px; margin: 0 4px 0 7px; }
.desktop { width: 14px; align-self: stretch; border: 1px solid #14233c; background: linear-gradient(#5f789d, #122c58); margin-left: -4px; }

.dialog { position: absolute; left: 539px; bottom: 0; width: 464px; height: 297px; display: flex; flex-direction: column; padding: 0 7px 0 6px; border: 1px solid #1c2436; border-bottom: 0; border-radius: 7px 7px 0 0; box-shadow: 0 0 8px #000; background: linear-gradient(#0a0d16, #0a1730 80px, #a8c0e4 120px, #b5cbed 210px, #1b3f78 250px, #0a2550); }
.dlg-head { flex: none; height: 29px; margin: 0 -7px 0 -6px; padding: 0 5px 0 5px; display: flex; justify-content: space-between; align-items: flex-start; border-radius: 7px 7px 0 0; background: linear-gradient(#080d1b, #16203a 10px, #4a566c 22px, #6c7688); }
.dlg-head h2 { font: 12px/16px "Noto Sans", sans-serif; margin-top: 6px; padding: 0 6px 0 1px; background: #9aa3b399; box-shadow: 0 0 8px 4px #9aa3b399; border-radius: 8px; }
.dlg-head button { width: 48px; height: 16px; display: grid; place-items: center; border: 1px solid #aab4c6; border-top: 0; border-radius: 0 0 5px 5px; background: linear-gradient(#5a6478, #1b2742 50%, #2c3c5c); }
.dlg-head svg { width: 11px; height: 9px; }
.dlg-body { flex: 1; min-height: 0; display: grid; grid-template-columns: 222px 212px; gap: 6px; padding: 5px 4px 0 4px; border-left: 1px solid #bcd; background: #f0f0f0; font: 11px/16px "Liberation Sans", sans-serif; white-space: nowrap; overflow: hidden; }
.dlg-left, .dlg-right { display: flex; flex-direction: column; min-width: 0; }
.orders { display: flex; gap: 11px; height: 85px; }
.col { display: flex; flex-direction: column; justify-content: space-between; }
.best { width: 84px; } .mid { width: 50px; } .last { width: 65px; margin-left: auto; }
.act { height: 20px; font: 12px/14px "Noto Sans", sans-serif; border: 1px solid #333; color: #111; }
.best .act { height: 35px; font-size: 11px; line-height: 13px; }
.act.sell { background: #ff7f50; border-color: #722; }
.act.buy { background: #1e90ff; border-color: #136; }
.act.close { height: 24px; background: #f00; font-weight: 700; font-size: 11px; }
.act.gray { background: #d3d3d3; }
.act.tall { height: 24px; }
.row { display: flex; align-items: center; height: 21px; }
.volume { margin-top: 9px; }
.volume label { width: 88px; padding-left: 1px; font: 11px/16px "Noto Sans", sans-serif; }
.volume .act { width: 65px; margin-left: auto; }
.stops { margin-top: 9px; }
.stops .chk { width: 42px; padding-bottom: 4px; }
.stops .tp { width: 44px; margin-left: 6px; }
.chk { display: flex; align-items: center; gap: 4px; }
input[type=checkbox], input[type=radio] { appearance: none; margin: 0; flex: none; width: 13px; height: 13px; border: 1px solid #8e8f8f; background: linear-gradient(135deg, #ccc, #fff); outline: 1px solid #f4f4f4; outline-offset: -2px; position: relative; }
input[type=radio] { border-radius: 50%; outline: 0; }
input[type=checkbox]:checked::before { content: ""; position: absolute; left: 4px; top: 1px; width: 4px; height: 7px; border: solid #3a4f9c; border-width: 0 2px 2px 0; transform: rotate(38deg); }
input[type=radio]:checked::before { content: ""; position: absolute; inset: 2px; border-radius: 50%; background: radial-gradient(circle at 35% 30%, #9fe0f8, #12475f 60%); }
.spin { position: relative; height: 20px; display: inline-block; flex: none; }
.spin input { width: 100%; height: 100%; padding: 0 18px 1px 2px; border: 1px solid #abadb3; background: #fff; font: 12px "Noto Sans", sans-serif; }
.spin::before, .spin::after { content: ""; position: absolute; right: 3px; width: 13px; height: 8px; border: 1px solid #c4c8d0; border-radius: 2px; background: conic-gradient(from 135deg at 50% 25%, #5468ac 90deg, transparent 0) center / 7px 4px no-repeat, #f4f4f4; }
.spin::before { top: 2px; }
.spin::after { bottom: 2px; transform: scaleY(-1); }
.w57 { width: 57px; } .w65 { width: 65px; } .w42 { width: 42px; } .w47 { width: 47px; }
fieldset { margin: 0; padding: 0 5px; min-width: 0; border: 1px solid #d0dae2; border-radius: 4px; }
legend { padding: 0 2px; margin-left: 1px; line-height: 14px; font-size: 12px; }
.signal { margin: 3px 0 -4px; padding-top: 2px; height: 120px; }
.signal .row { height: 23px; }
.side { width: 74px; }
.enable { color: #006400; font: bold 14px/16px "Noto Sans", sans-serif; }
.after { margin-left: 3px; }
.far { margin-left: 7px; }
.useline { width: 141px; }
.limit { height: 123px; padding-top: 1px; }
.limit .row:nth-of-type(1) { height: 18px; }
.limit .row:nth-of-type(2) { height: 22px; }
.limit .row:nth-of-type(3) { height: 24px; }
.move { width: 117px; }
.pre { width: 103px; }
.take { margin-top: 2px; padding-left: 8px; }
```
FILE: charts.js
```js
const NS = 'http://www.w3.org/2000/svg';

function layer(id, dx, dy) {
  const g = document.createElementNS(NS, 'g');
  g.setAttribute('transform', `translate(${-dx},${-dy})`);
  g.setAttribute('shape-rendering', 'crispEdges');
  document.getElementById(id).append(g);
  return (tag, attrs, text) => {
    const e = document.createElementNS(NS, tag);
    for (const k in attrs) e.setAttribute(k, attrs[k]);
    if (text) e.textContent = text;
    g.append(e);
    return e;
  };
}
const rect = (d, x, y, w, h, fill, more) => d('rect', { x, y, width: w, height: h, fill, ...more });
const text = (d, x, y, s, cls) => d('text', { x, y, class: cls || '', style: 'white-space:pre' }, s);
const STEEL = '#b0c4de';

/* chart tool strips */
const icons = {
  plus: '<path d="M6.500 2v9M2 6.500h9" stroke="#b0c4de"/>',
  dash: '<path d="M2 6.500h9" stroke="#b0c4de" stroke-width="2"/>',
  bar: '<path d="M6.500 2v9" stroke="#b0c4de" stroke-width="2"/>',
  slash: '<path d="M3 11l7-9" stroke="#b0c4de" stroke-width="1.500"/>',
  rows: '<path d="M1 2.500h6M1 4.500h9M1 6.500h6M1 8.500h11M1 10.500h8" stroke="#b0c4de"/>',
  fib: '<path d="M1 2.500h11M1 5.500h5M1 8.500h5" stroke="#b0c4de" opacity=".7"/>',
  dot: '<circle cx="6.500" cy="6.500" r="4.500" fill="#b0c4de"/>',
  arrow: '<path d="M1 6.500h9M7 3l4 3.500L7 10z" stroke="#b0c4de" fill="#b0c4de"/>',
  beam: '<path d="M3 1.500h7M3 11.500h7M6.500 1v11" stroke="#b0c4de" stroke-width="1.500"/>'
};
const strip = [['plus'], , ['dash'], ['bar'], ['slash'], ['rows'], ['fib'], ['dot']];
const letters = { 1: 'H', 8: 'P', 9: 'Pₕ', 10: 'C', 11: 'A', 14: 'M' };
document.querySelectorAll('.tools').forEach((box, n) => {
  const on = box.dataset.on.split(' ').map(Number);
  const make = i => {
    const b = document.createElement('button');
    if (on.includes(i)) b.className = 'on';
    if (letters[i]) b.textContent = letters[i];
    else {
      const key = i === 12 ? 'arrow' : i === 13 ? 'beam' : strip[i][0];
      b.setAttribute('aria-label', key);
      b.innerHTML = `<svg viewBox="0 0 13 13" overflow="visible">${icons[key]}${i === 6 ? '<text x="6" y="11" style="font:bold 9px Noto Sans;fill:#b0c4de">F</text>' : ''}</svg>`;
    }
    return b;
  };
  for (let i = 0; i <= 10; i++) box.append(make(i));
  box.insertAdjacentHTML('beforeend', '<svg width="7" height="13"><path d="M.5 0v13M6.500 3v7L2.500 6.500z" stroke="#b0c4de" fill="none"/></svg>');
  if (n === 0) box.insertAdjacentHTML('beforeend', '<span class="picker"><select aria-label="Режим"><option>volume</option></select></span><span class="stepper"><input aria-label="Шаг" value="2"><svg viewBox="0 0 12 18"><path d="M2 7h8L6 2zM2 11h8l-4 5z" fill="#b0c4de"/><path d="M0 9h12" stroke="#b0c4de"/></svg></span>');
  const modes = document.createElement('span');
  modes.className = 'modes';
  for (let i = 11; i <= 14; i++) modes.append(make(i));
  box.append(modes);
});

/* MESM21: volume clusters.  b/p = highlighted cell, g/w = number colour */
const clusters = [
  [0, 328, 32, 'b219 g296 w381 w434 w198'],
  [35, 360, 32, 'w185 w238 w341 w630 p93', ['r', 361, 392]],
  [69, 339, 32, 'w90 g400 g394 g413 p102', ['c', 383, 392]],
  [104, 382, 32, 'p86 p187 w216 w336 p158 w372 p106', ['r', 383, 457], ['r387', 'r398', 'r430']],
  [138, 436, 32, 'g8 g387 w431 w531 w226', ['r', 448, 467], ['r441']],
  [172, 382, 32, 'b97 b193 b347 w285 g269 g53 g137 w37', ['c', 383, 467], ['c387', 'c430', 'c452']],
  [207, 328, 31, 'b57 b98 b170 b192 g676 g276', ['c', 329, 391], ['c333', 'c344', 'c355']],
  [241, 307, 32, 'b257 w630 w421 w73', ['c', 318, 338], ['c333']],
  [276, 286, 32, 'b49 g294 g503 w575', ['r', 318, 327]],
  [310, 307, 32, 'g16 g560 w299 w457', ['c', 317, 327], ['r312', 'r333']],
  [344, 286, 32, 'b45 g548 g124 w398 w263 w21', ['r', 317, 338], ['r291', 'c302', 'c333']],
  [379, 317, 32, 'g2 p58 g315 w805 p296', ['r', 329, 360], ['r323', 'r333']],
  [413, 339, 32, 'b142 g593 g617 p136', ['c', 340, 360]],
  [448, 297, 32, 'b135 g401 b683 w241 g47 w12', ['c', 298, 348], ['c323', 'c333']],
  [482, 264, 33, 'g316 w488 g466 w178 w25', ['r', 298, 307], ['c291']],
  [517, 286, 32, 'b66 w488 p190', ['c', 298, 317], ['r291']]
];
const tick = layer('tick-plot', 6, 100);
const ROW = 10.7;
for (const [x, y, w, cells, side, marks] of clusters) {
  const list = cells.split(' ');
  rect(tick, x, y, w, list.length * ROW, '#3c3c3c');
  list.forEach((c, i) => {
    const kind = c[0], top = y + i * ROW;
    if (kind === 'b') rect(tick, x, top, w, ROW, '#0073a0');
    if (kind === 'p') rect(tick, x, top, w, ROW, '#5a4cab');
    const t = text(tick, x === 0 ? 16 : x + w / 2, Math.round(top + 8), c.slice(1), 'cellnum');
    t.style.fill = kind === 'w' || kind === 'p' ? '#ffdcdc' : kind === 'b' ? '#b9f5b0' : '#c8ff90';
  });
  rect(tick, x + .5, y + .5, w - 1, list.length * ROW, 'none', { stroke: '#969696' });
  if (side) rect(tick, x - 2, side[1], 3, side[2] - side[1], side[0] === 'r' ? '#dc143c' : '#00ced1');
  for (const m of marks || []) {
    const c = m[0] === 'r' ? '#cd5c5c' : '#00ced1';
    rect(tick, x - 1, +m.slice(1) + .5, w, 10.7, m[0] === 'r' ? '#c82828' : '#10b4bc', { 'fill-opacity': .42, stroke: c });
  }
}
rect(tick, 6, 259, 686, 1, '#f00000');
rect(tick, 186, 301, 514, 3, '#ff1000');
rect(tick, 6, 302, 686, 1, '#ff7f50');
rect(tick, 6, 322, 686, 1, '#008b8b');
tick('path', { d: 'M352 297v11l6-5.500zM467 328v11l-6-5.500z', fill: '#ff0' });
tick('path', { d: 'M364 317v11l-6-5.500zM386 328v11l6-5.500z', fill: '#0ff' });
tick('path', { d: 'M541 101h11l-5.500 5z', fill: STEEL });
['Справа огромный шарик и цену сразу затяноло к', 'предыдущему максимуму. Появился комбо-', 'сигнал на продажу. Вход советником.'].forEach((s, i) => text(tick, 327, 162 + i * 19, s, 'note'));
const order = (x, y, fill, label) => {
  rect(tick, x + 1, y + 1, 686 - x, 17, fill, { stroke: '#c0c0c0', 'stroke-width': 2 });
  rect(tick, 671, y + 3, 14, 14, '#ff6347', { stroke: '#222' });
  tick('path', { d: `M674 ${y + 5}l9 9M683 ${y + 5}l-9 9`, stroke: '#000', 'shape-rendering': 'auto' });
  text(tick, x + 4, y + 14, label, 'ui').style.fill = '#200';
};
order(585, 250, '#ff0000', 'Stop Loss   -7');
order(609, 293, '#ff6347', 'Sell  1,  0');
order(597, 313, '#008b8b', 'Buy Limit  1');
text(tick, 554, 320, '17:41:04', 'strong');
text(tick, 554, 333, '508', 'strong');
tick('use', { href: '#i-tools', x: 9, y: 504, width: 18, height: 18 });
text(tick, 31, 519, 'O: 4229.25  H: 4231.25  L: 4229.00  C: 4229.75', 'ohlc');

function scale(d, x, right, y0, p0, step, from, to, minor) {
  for (let p = from; p <= to; p++) {
    const y = Math.round(y0 - (p - p0) * step);
    rect(d, x, y, 12, 1, STEEL);
    for (let m = 1; m < minor; m++) rect(d, x, Math.round(y + m * step / minor), 5, 1, '#777');
    text(d, right, y + 4, p.toFixed(2), 'end');
  }
}
const tickAxis = layer('tick-axis', 692, 100);
rect(tickAxis, 692, 100, 1, 500, STEEL);
scale(tickAxis, 692, 767, 355, 4230, 21.4, 4223, 4242, 2);
const tag = (y, fill, s) => {
  rect(tickAxis, 693, y + 9, 13, 1, fill);
  rect(tickAxis, 707, y + 1, 64, 17, fill, { stroke: '#b0b0b0', 'stroke-width': 2 });
  text(tickAxis, 767, y + 14, s, 'tag end');
};
tickAxis('path', { d: 'M697 302l8-6v12z', fill: '#999' });
tag(250, '#ff0000', '4234.50'); tag(293, '#ff6347', '4232.75'); tag(313, '#008b8b', '4231.50');
const tickTime = layer('tick-time', 6, 547);
[[6, ':01'], [85, '11:21'], [174, '11:37'], [264, '11:55'], [354, '12:09'], [444, '12:30']].forEach(([x, s]) => text(tickTime, x, 561, s));

/* EPM21: volume profile, values in thirds of a pixel from the left edge */
const min = layer('minute-plot', 786, 98);
const profile = [4, 98, 59, 104, 92, 89, 245, 327, 284, 269, 605, 605, 368, 335, 320, 296, 482, 940, 848, 857, 1025, 839, 958, 812, 950, 1004, 1001, 1169, 1100, 1115, 1278, 1166, 905, 965, 1073, 998, 1022, 815, 550, 482, 341, 227, 143, 203, 140, 113, 47, 29, 14, 11, 8, 4];
profile.forEach((v, i) => rect(min, 785.5, Math.round(144 + i * 4.04) + .5, Math.round(v / 3), 2, '#1c1c1c', { stroke: '#6b6b6b' }));
rect(min, 785, 172, 109, 3, '#70747c');
rect(min, 785, 173, 503, 1, '#9aa4c0');
rect(min, 785.5, 265.5, 425, 2, '#3c6400', { stroke: '#8fc31f' });
rect(min, 968.5, 297.5, 242, 2, '#5c4630', { stroke: '#deb887' });
rect(min, 1100.5, 213.5, 110, 2, '#5c4630', { stroke: '#deb887' });
const discs = [[14, 380, 20, 'k'], [76, 440, 17, 'l'], [442, 390, 17, 'k'], [484, 320, 17, 'm'], [544, 367, 17, 'k'], [586, 307, 24, 'l'], [628, 259, 25, 'l'], [667, 367, 20, 'k'], [751, 331, 28, 'r'], [790, 463, 37, 'r'], [853, 404, 25, 'l'], [934, 197, 40, 'c'], [994, 223, 31, 'd'], [1096, 284, 33, 'd'], [1159, 296, 25, 'c'], [1219, 124, 52, 'm']];
const discFill = { k: '#f0a0a0', l: '#d2f2f2', m: '#8fd6d6', r: '#e07070', c: '#66c4c4', d: '#b44040' };
const discEdge = { k: '#f4a0a0', l: '#c8f4f4', m: '#9ff0f0', r: '#f06060', c: '#7fe8e8', d: '#e05050' };
for (const [x, y, r, k] of discs) min('circle', { cx: 785 + x / 3, cy: 120 + y / 3, r: r / 3, fill: discFill[k], 'fill-opacity': .88, stroke: discEdge[k], 'shape-rendering': 'auto' });
const candles = '14 354 416 378 416 g,34 342 405 378 392 r,55 378 440 378 440 r,76 425 490 440 440 x,97 391 440 416 440 g,115 378 416 402 416 g,136 378 430 390 404 g,157 378 404 390 404 r,178 342 404 366 392 g,199 330 356 342 356 g,217 330 392 342 392 r,238 354 404 366 392 g,259 366 416 366 392 r,280 390 430 390 416 r,301 402 453 414 440 r,322 414 465 440 440 x,340 366 440 390 440 g,361 390 453 390 440 r,382 402 453 414 453 g,403 390 430 414 428 g,424 378 416 378 404 g,442 366 428 366 392 r,463 342 392 342 392 g,484 306 356 318 356 g,505 306 344 318 332 r,526 330 356 342 356 r,544 330 392 367 367 x,565 282 368 306 368 g,586 282 332 306 306 x,607 270 320 282 320 g,628 222 296 258 284 g,649 258 308 258 308 r,667 294 404 294 368 r,688 330 380 354 380 g,709 354 392 354 380 r,730 270 380 282 368 g,751 246 332 270 332 r,769 318 356 330 356 r,790 354 490 354 465 r,811 463 573 475 512 r,832 450 524 462 524 g,853 380 465 402 452 g,874 318 416 318 416 g,892 318 356 331 331 x,913 306 332 306 320 g,934 170 308 196 308 g,955 172 210 196 196 x,976 148 210 172 196 g,994 160 224 160 224 r,1015 196 260 208 224 g,1036 183 236 208 208 x,1057 183 236 196 224 r,1078 135 224 160 224 g,1096 135 296 160 284 r,1117 246 308 258 296 g,1138 246 320 270 308 r,1159 282 320 294 308 g,1180 234 296 246 284 g,1201 183 272 208 260 g,1219 80 224 124 196 g,1240 112 172 124 148 r,1261 136 186 136 160 r';
candles.split(',').forEach(row => {
  const v = row.split(' '), x = Math.round(784.7 + v[0] / 3);
  const [a, b, c, e] = v.slice(1, 5).map(n => Math.round(120 + n / 3));
  rect(min, x, a, 1, b - a, '#8c8c8c');
  if (v[5] === 'x') rect(min, x - 2, c, 5, 1, '#8c8c8c');
  else rect(min, x - 1.5, c + .5, 4, Math.max(3, e - c - 1), v[5] === 'g' ? '#32cd32' : '#e01010', { stroke: '#a0a0a0' });
});
min('path', { d: 'M792.500 98v338M786 363.500h502', stroke: '#fff', 'stroke-dasharray': '4 3', fill: 'none' });
min('path', { d: 'M1202 98h11l-5.500 5z', fill: STEEL });
text(min, 1265, 191, '17:41:04', 'strong end');
text(min, 1265, 204, '00:53', 'strong end');
min('use', { href: '#i-tools', x: 789, y: 415, width: 18, height: 18 });
text(min, 811, 430, 'O: 4227.25  H: 4228.50  L: 4227.25  C: 4228.00', 'ohlc');
rect(min, 786, 435, 502, 1, STEEL);
text(min, 791, 453, 'Volume 882', 'ui');
const volume = '31 217 r,52 212 r,73 219 r,94 234 r,115 201 c,136 159 r,154 192 r,175 111 r,196 114 r,217 186 c,238 183 c,259 183 c,277 189 r,298 186 c,319 93 c,340 195 r,361 192 c,379 141 r,400 198 r,421 198 c,442 216 r,463 195 c,481 129 r,502 150 c,523 198 r,544 177 c,565 183 c,586 150 c,604 30 c,625 195 r,646 222 r';
volume.split(',').forEach(row => {
  const [x, t, k] = row.split(' '), top = Math.round(430 + t / 3);
  rect(min, Math.round(987.5 + x / 3), top, 5, 523 - top, k === 'r' ? '#a00000' : '#00b4b4');
});

const minAxis = layer('minute-axis', 1288, 98);
rect(minAxis, 1288, 98, 1, 427, STEEL);
scale(minAxis, 1288, 1362, 424, 4217, 16.18, 4217, 4237, 4);
rect(minAxis, 1288, 435, 80, 1, STEEL);
minAxis('path', { d: 'M1294 173l12-8h60v16h-60z', fill: '#808080' });
text(minAxis, 1363, 178, '4232.50', 'tag end').style.fontWeight = 'bold';
rect(minAxis, 1303.5, 355.5, 64, 16, '#808080', { stroke: '#fff' });
text(minAxis, 1363, 368, '4220.75', 'tag end').style.fill = '#fff';
rect(minAxis, 1289, 363, 12, 1, '#fff');
rect(minAxis, 1289, 504, 12, 1, STEEL);
rect(minAxis, 1303.5, 496.5, 51, 16, '#808080', { stroke: '#fff' });
text(minAxis, 1351, 509, '709', 'ui end').style.fill = '#fff';

const minTime = layer('minute-time', 786, 547);
text(minTime, 1016, 561, '11:21');
text(minTime, 1105, 561, '12:00');
rect(minTime, 1174.5, 549.5, 34, 15, 'none', { stroke: STEEL });
text(minTime, 1358, 563, '2021.06.09 12:39:03', 'ohlc end');
```
